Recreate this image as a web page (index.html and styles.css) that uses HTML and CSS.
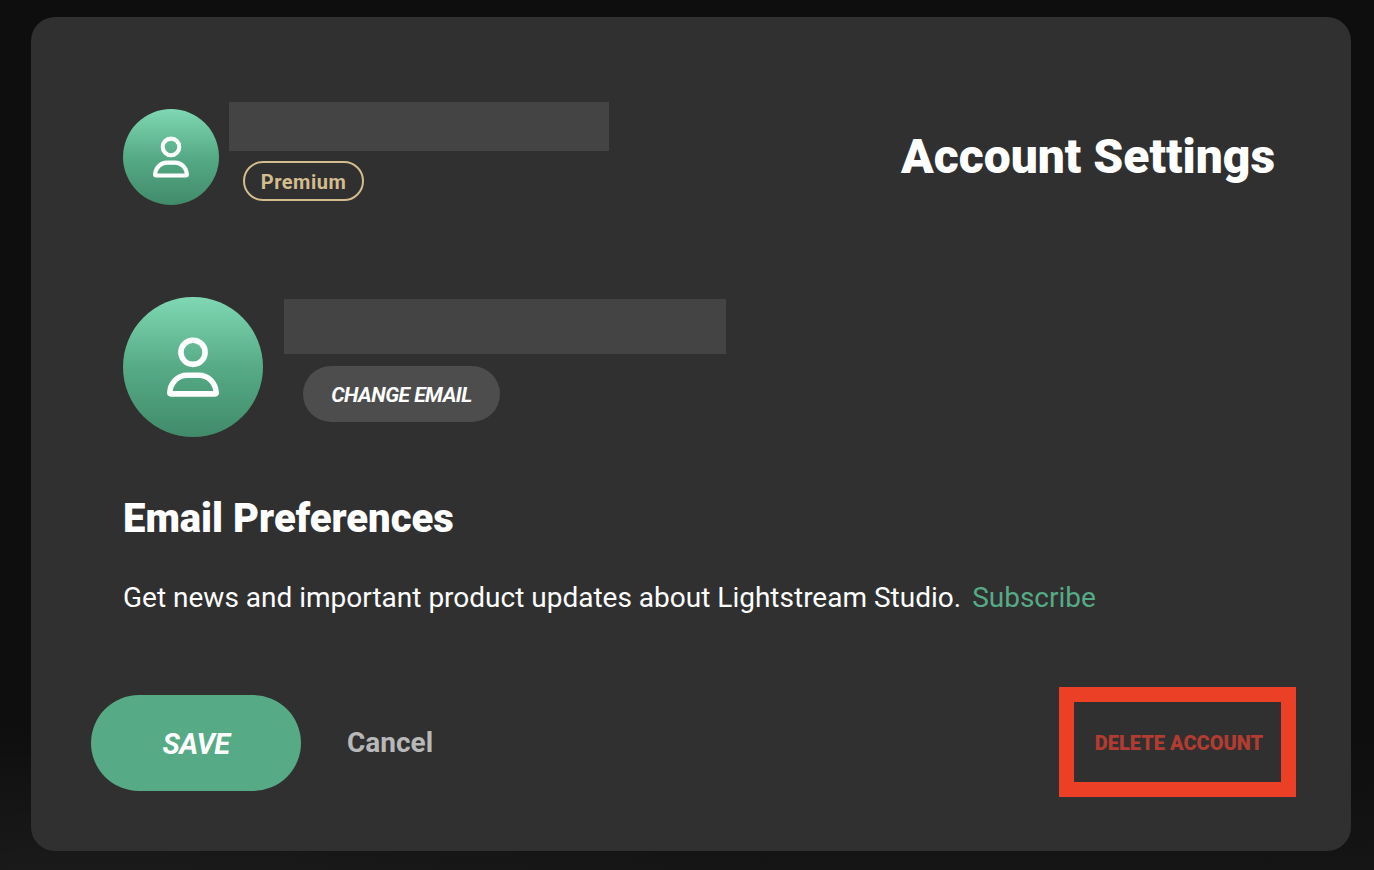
FILE: index.html
```html
<!DOCTYPE html>
<html lang="en">
<head>
<meta charset="utf-8">
<title>Account Settings</title>
<link rel="stylesheet" href="styles.css">
</head>
<body>
<svg class="defs" aria-hidden="true">
  <symbol id="person" viewBox="0 0 140 140">
    <circle cx="70" cy="55.3" r="12.1"/>
    <path d="M46.8 95.6Q46.8 96.9 48 96.9H92Q93.2 96.9 93.2 95.6C92.6 85.5 85 78.2 76 78.2H64C55 78.2 47.4 85.5 46.8 95.6Z"/>
  </symbol>
</svg>
<main class="card">
  <header class="header">
    <div class="avatar avatar-small"><svg><use href="#person"/></svg></div>
    <div class="user">
      <div class="user-name"></div>
      <span class="badge">Premium</span>
    </div>
    <h1 class="title">Account Settings</h1>
  </header>
  <section class="profile">
    <div class="avatar avatar-large"><svg><use href="#person"/></svg></div>
    <div class="email">
      <div class="email-address"></div>
      <button class="change-email"><span>CHANGE EMAIL</span></button>
    </div>
  </section>
  <section class="preferences">
    <h2 class="subtitle">Email Preferences</h2>
    <p class="news"><span class="news-text">Get news and important product updates about Lightstream Studio.</span><a class="subscribe">Subscribe</a></p>
  </section>
  <footer class="footer">
    <button class="save"><span>SAVE</span></button>
    <button class="cancel"><span>Cancel</span></button>
    <button class="delete"><span>DELETE ACCOUNT</span></button>
  </footer>
</main>
</body>
</html>
```
FILE: styles.css
```css
* { box-sizing: border-box; }
body {
  margin: 0;
  height: 870px;
  padding: 17px 23px 19px 31px;
  overflow: hidden;
  background:
    radial-gradient(ellipse 620px 160px at 100px 100%, rgba(255, 255, 255, 0.025), transparent),
    linear-gradient(#0e0e0e 0, #0e0e0e 740px, #151515 870px);
  font-family: Roboto, "Liberation Sans", sans-serif;
  color: #fff;
}
h1, h2, p { margin: 0; }
button {
  display: flex;
  align-items: center;
  justify-content: center;
  margin: 0;
  padding: 0;
  border: 0;
  background: none;
  font-family: inherit;
  white-space: nowrap;
}
.defs { position: absolute; width: 0; height: 0; }
.card {
  display: flex;
  flex-direction: column;
  height: 834px;
  padding: 85px 55px 54px 60px;
  border-radius: 24px;
  background: #303030;
}
.header { display: flex; height: 104px; padding: 0 21px 0 32px; }
.avatar {
  flex: none;
  border-radius: 50%;
  background: linear-gradient(#7fd8b3, #56ab86 50%, #418b6a);
}
.avatar svg {
  display: block;
  width: 100%;
  height: 100%;
  fill: none;
  stroke: #fff;
  stroke-width: 5.6;
  stroke-linejoin: round;
}
.avatar-small { width: 96px; height: 96px; margin-top: 7px; }
.avatar-small svg { stroke-width: 5.9; }
.avatar-large { width: 140px; height: 140px; }
.user { margin-left: 10px; }
.user-name { width: 380px; height: 49px; background: #444; }
.badge {
  display: flex;
  align-items: center;
  justify-content: center;
  width: 121px;
  height: 40px;
  margin: 10px 0 0 14px;
  padding-top: 2px;
  border: 2px solid #d3bc8e;
  border-radius: 20px;
  color: #d3bc8e;
  font-size: 20px;
  font-weight: 700;
  letter-spacing: 0.5px;
  line-height: 24px;
}
.title {
  margin-left: auto;
  padding-top: 27px;
  font-size: 48px;
  font-weight: 900;
  line-height: 56px;
  white-space: nowrap;
}
.profile { display: flex; height: 140px; margin-top: 91px; padding-left: 32px; }
.email { margin-left: 21px; padding-top: 2px; }
.email-address { width: 442px; height: 55px; background: #444; }
.change-email {
  width: 197px;
  height: 56px;
  margin: 12px 0 0 19px;
  padding-top: 2px;
  border-radius: 28px;
  background: #4d4d4d;
  color: #fff;
  font-size: 21px;
  font-style: italic;
  font-weight: 700;
  letter-spacing: -0.5px;
}
.preferences { margin-top: 58px; padding-left: 32px; }
.subtitle { font-size: 40px; font-weight: 900; line-height: 48px; }
.news { display: flex; margin-top: 39px; font-size: 28px; line-height: 32px; white-space: nowrap; }
.subscribe { margin-left: 11px; color: #56ab86; }
.footer { display: flex; align-items: center; height: 110px; margin-top: auto; }
.save {
  width: 210px;
  height: 96px;
  margin-top: 2px;
  padding-top: 1px;
  border-radius: 48px;
  background: #56ab86;
  color: #fff;
  font-size: 29px;
  font-style: italic;
  font-weight: 700;
  letter-spacing: -0.6px;
}
.cancel { margin-left: 46px; color: #b8b8b8; font-size: 28px; font-weight: 700; }
.delete {
  width: 237px;
  height: 110px;
  margin-left: auto;
  padding: 1px 0 0 3px;
  border: 15px solid #eb4026;
  color: #b23c31;
  font-size: 20px;
  font-weight: 900;
}
```
